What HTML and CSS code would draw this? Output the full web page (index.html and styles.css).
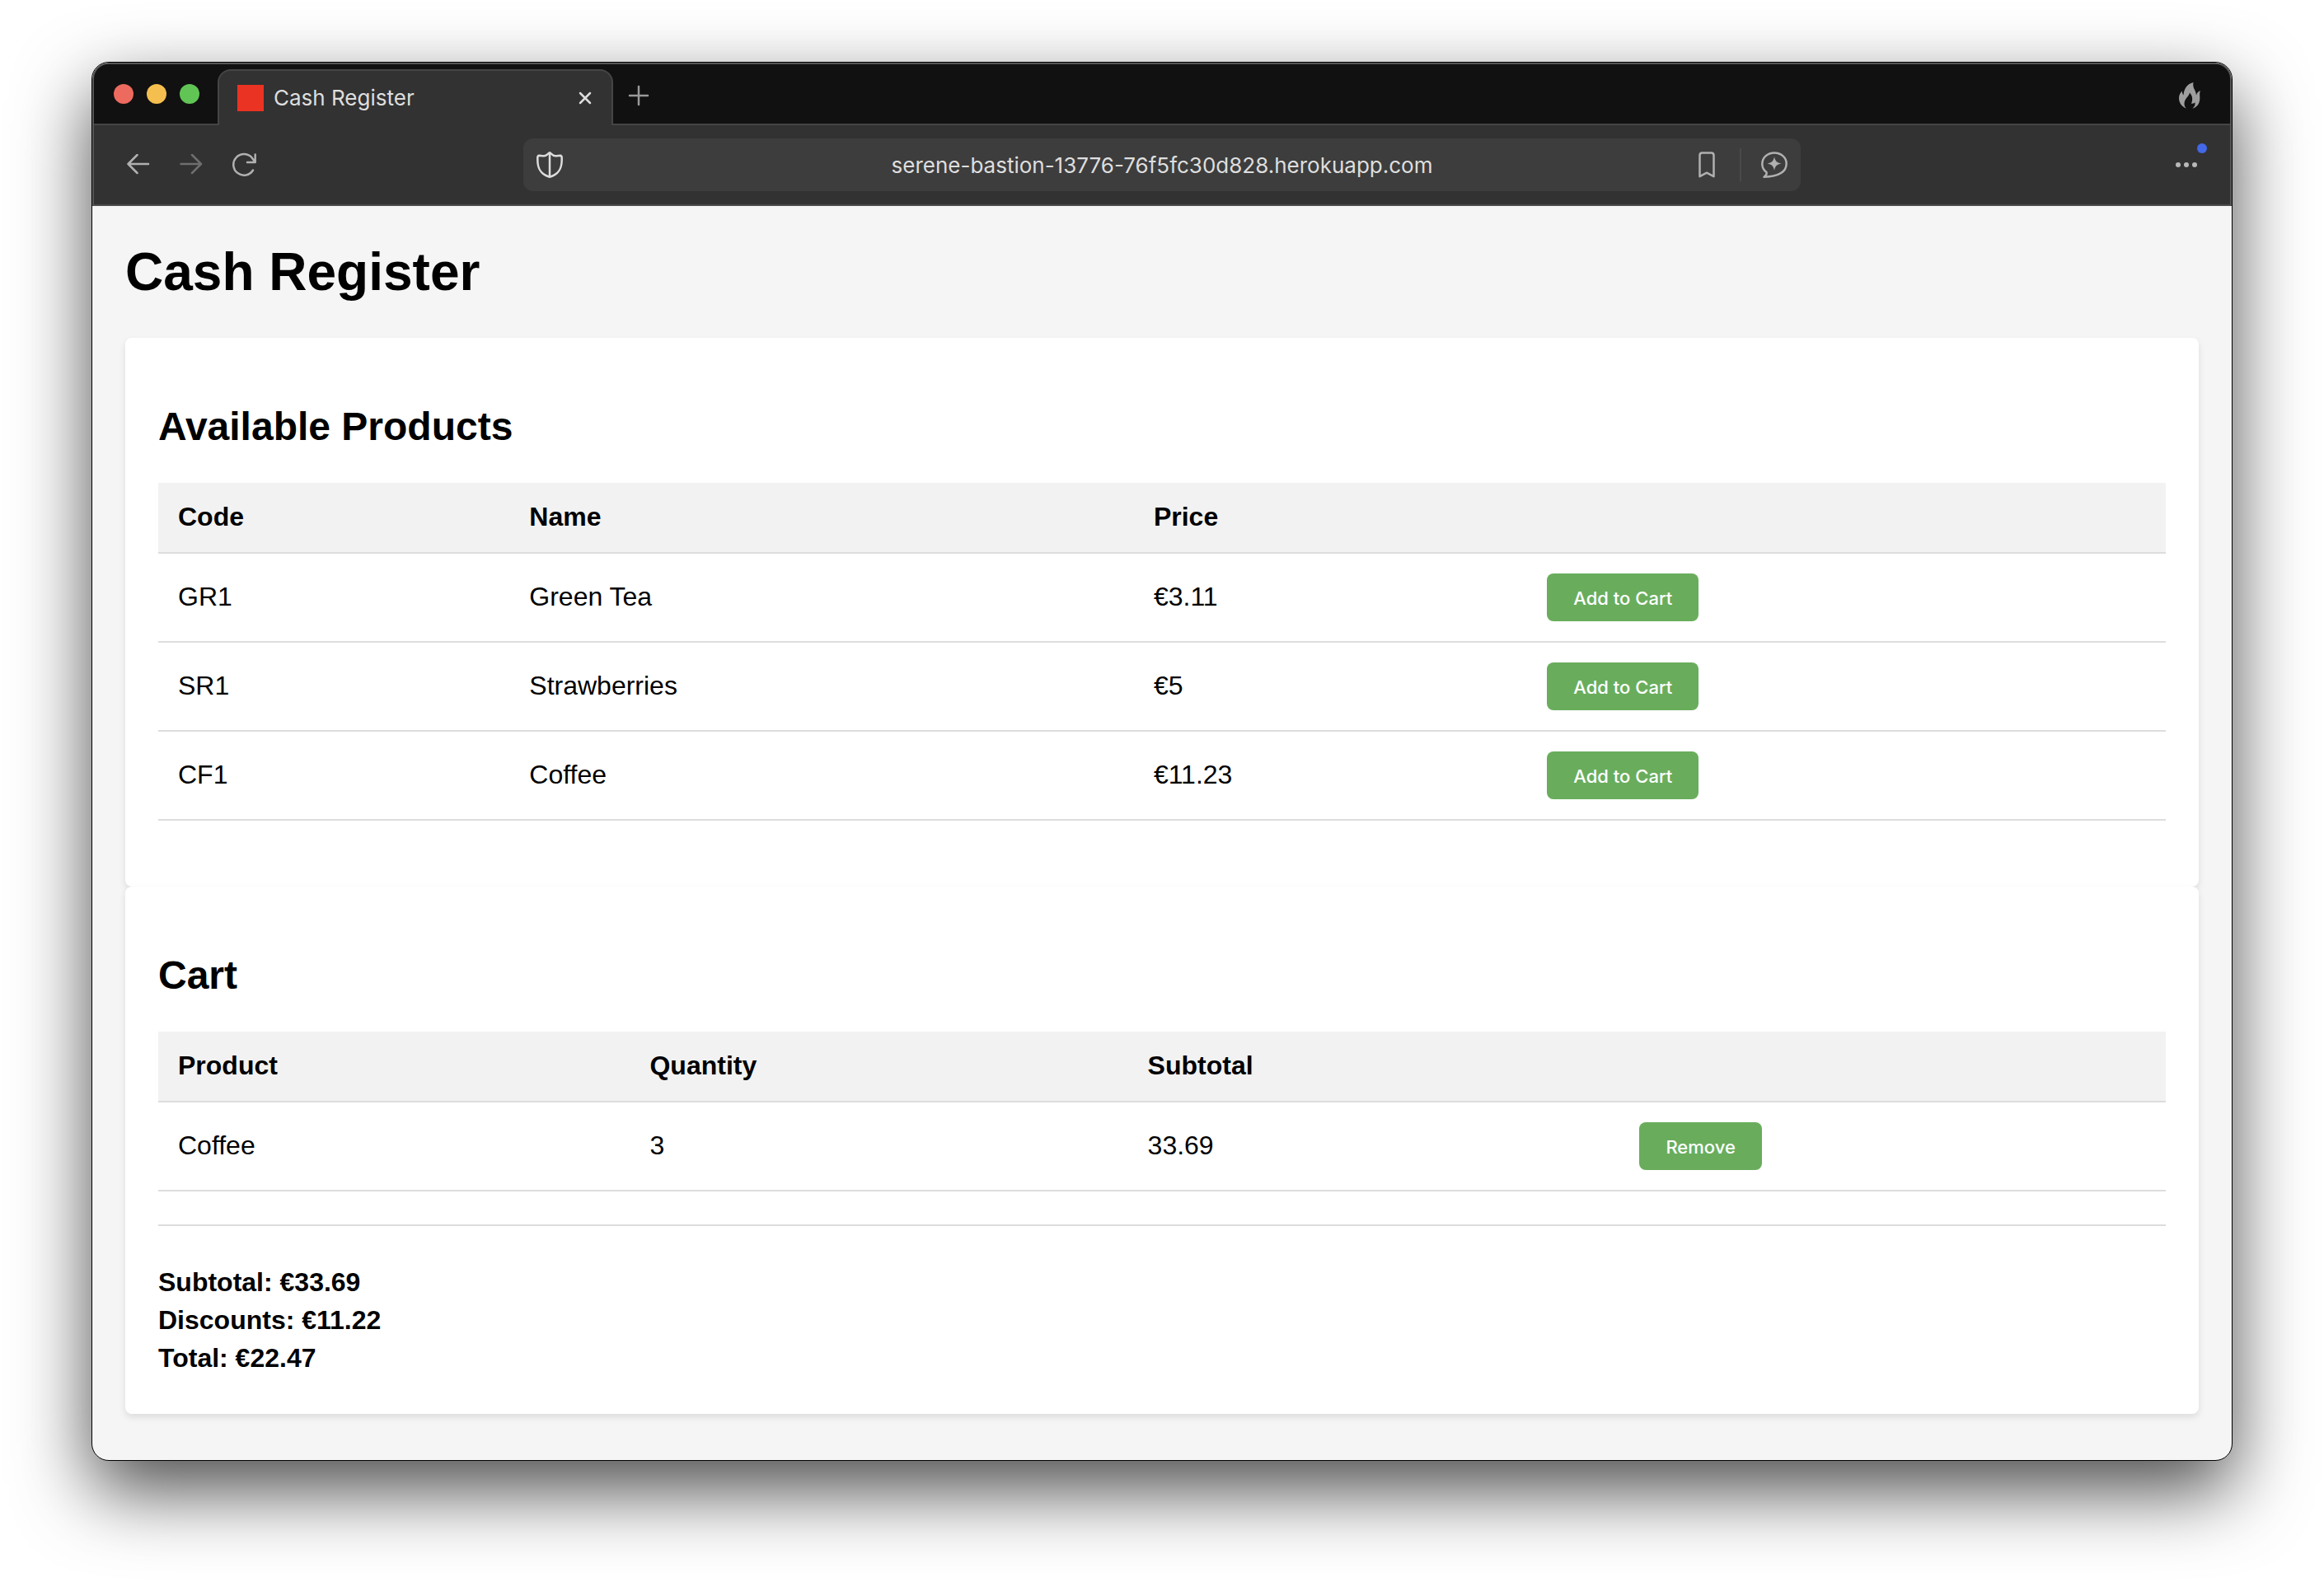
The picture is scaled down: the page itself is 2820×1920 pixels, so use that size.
FILE: index.html
```html
<!DOCTYPE html>
<html lang="en">
<head>
<meta charset="utf-8">
<title>Cash Register</title>
<link rel="stylesheet" href="styles.css">
</head>
<body>
<div class="window">
  <header class="chrome">
    <div class="tabstrip">
      <div class="lights">
        <button class="light light-close" aria-label="Close window"></button>
        <button class="light light-min" aria-label="Minimize window"></button>
        <button class="light light-max" aria-label="Zoom window"></button>
      </div>
      <div class="tab">
        <span class="favicon"></span>
        <span class="tab-title">Cash Register</span>
        <button class="icon-btn" aria-label="Close tab">
          <svg class="icon" width="16" height="16" viewBox="0 0 16 16" stroke="#dcdcdc" stroke-width="2.5"><path d="M2 2l12 12M14 2L2 14"/></svg>
        </button>
      </div>
      <button class="icon-btn new-tab" aria-label="New tab">
        <svg class="icon" width="26" height="26" viewBox="0 0 26 26" stroke="#999" stroke-width="2.5"><path d="M13 2v22M2 13h22"/></svg>
      </button>
      <button class="icon-btn fire" aria-label="Clear data">
        <svg width="26" height="32" viewBox="0 0 26 32"><path fill="#9e9e9e" d="M17.5 0C16.5 4 18 7 19.5 10C20.5 12 20.8 14 21 15.5C21.8 13 23 11 26 10C24.5 13 25.5 16 25.3 20C25 26 22 30 16.5 31.7C19 29 20 27.5 19.5 24C19 25 17.5 26 15 25.7C17 21 16.5 16 13 12.5C12.5 17 6.5 19.5 6.5 26C6.5 28.5 7.5 30.5 9 31.5C3.5 29.5 0 25 0 19C0 15.5 1.5 12.5 3.8 10.5C3.8 12.5 4.3 14 5.5 15.5C6 9 9 2 17.5 0z"/></svg>
      </button>
    </div>
    <div class="toolbar">
      <nav class="nav">
        <button class="icon-btn" aria-label="Back">
          <svg class="icon" width="28" height="26" viewBox="0 0 28 26" stroke="#b0b0b0" stroke-width="2.5"><path d="M12.5 1L1.5 12L12.5 23M1.5 12H26"/></svg>
        </button>
        <button class="icon-btn" aria-label="Forward">
          <svg class="icon" width="28" height="26" viewBox="0 0 28 26" stroke="#6e6e6e" stroke-width="2.5"><path d="M15 1L26 12L15 23M26 12H1.5"/></svg>
        </button>
        <button class="icon-btn" aria-label="Reload">
          <svg class="icon" width="30" height="30" viewBox="0 0 30 30" stroke="#b0b0b0" stroke-width="2.5"><path d="M25 21.5A12.8 12.8 0 1 1 23.5 6.2L27.5 11.5M27.7 2.5V12H18"/></svg>
        </button>
      </nav>
      <div class="address">
        <svg class="icon shield" width="32" height="32" viewBox="0 0 32 32" stroke="#dcdcdc" stroke-width="2.5"><path d="M16 1.3C14.5 1.3 13 5.3 9 5.3C6.5 5.3 5 4.8 3.2 4.8Q1.3 5 1.3 7.5V10C1.3 22 6 28 16 30.7C26 28 30.7 22 30.7 10V7.5Q30.7 5 28.8 4.8C27 4.8 25.5 5.3 23 5.3C19 5.3 17.5 1.3 16 1.3zM16 1.3V30.7"/></svg>
        <input class="url" type="text" aria-label="Address" value="serene-bastion-13776-76f5fc30d828.herokuapp.com" readonly>
        <button class="icon-btn" aria-label="Bookmark">
          <svg class="icon" width="20" height="32" viewBox="0 0 20 32" stroke="#b0b0b0" stroke-width="2.5"><path d="M4.5 1.5H15.5Q18.5 1.5 18.5 4.5V30.2L10 25.7L1.5 30.2V4.5Q1.5 1.5 4.5 1.5z"/></svg>
        </button>
        <span class="divider"></span>
        <button class="icon-btn" aria-label="Chat">
          <svg class="icon" width="32" height="32" viewBox="0 0 32 32" stroke="#b0b0b0" stroke-width="2.5"><path d="M6.5 25C3 22.5 1.3 19 1.3 15C1.3 7.5 7.5 1.5 16 1.5C24.5 1.5 30.7 7.5 30.7 14.5C30.7 24.5 22 30 3.5 30.7C7 28.5 7 27 6.5 25z"/><path fill="#b0b0b0" stroke="none" d="M16 6C17 11.500 19 13.500 24.5 14.5C19 15.5 17 17.500 16 23C15 17.500 13 15.5 7.5 14.5C13 13.500 15 11.500 16 6z"/></svg>
        </button>
      </div>
      <button class="icon-btn menu" aria-label="Menu">
        <svg width="26" height="6" viewBox="0 0 26 6" fill="#b8b8b8"><circle cx="3" cy="3" r="3"/><circle cx="13" cy="3" r="3"/><circle cx="23" cy="3" r="3"/></svg>
        <span class="badge"></span>
      </button>
    </div>
  </header>

  <main class="page">
    <h1>Cash Register</h1>

    <section class="card">
      <h2>Available Products</h2>
      <table class="products">
        <thead>
          <tr><th class="col-code">Code</th><th class="col-name">Name</th><th class="col-price">Price</th><th></th></tr>
        </thead>
        <tbody>
          <tr><td>GR1</td><td>Green Tea</td><td>€3.11</td><td><button class="btn">Add to Cart</button></td></tr>
          <tr><td>SR1</td><td>Strawberries</td><td>€5</td><td><button class="btn">Add to Cart</button></td></tr>
          <tr><td>CF1</td><td>Coffee</td><td>€11.23</td><td><button class="btn">Add to Cart</button></td></tr>
        </tbody>
      </table>
    </section>

    <section class="card">
      <h2>Cart</h2>
      <table class="cart">
        <thead>
          <tr><th class="col-product">Product</th><th class="col-quantity">Quantity</th><th class="col-subtotal">Subtotal</th><th></th></tr>
        </thead>
        <tbody>
          <tr><td>Coffee</td><td>3</td><td>33.69</td><td><button class="btn">Remove</button></td></tr>
        </tbody>
      </table>
      <div class="totals">
        <p>Subtotal: €33.69</p>
        <p>Discounts: €11.22</p>
        <p>Total: €22.47</p>
      </div>
    </section>
  </main>
</div>
</body>
</html>
```

FILE: styles.css
```css
* {
  box-sizing: border-box;
}

body {
  margin: 0;
  min-height: 100vh;
  padding: 75px 111px 147px;
  display: flex;
  flex-direction: column;
  background: #fff;
  color: #000;
  font-family: "Liberation Sans", Arial, sans-serif;
  font-size: 32px;
  line-height: 36px;
}

.window {
  flex: 1;
  display: flex;
  flex-direction: column;
  border: 1px solid #000;
  border-radius: 21px;
  background: #f5f5f5;
  box-shadow: 0 36px 90px rgba(0, 0, 0, 0.7);
}

/* Browser chrome */

.chrome {
  border: 2px solid #565656;
  border-bottom-color: #4a4a4a;
  border-radius: 20px 20px 0 0;
  background: #323232;
  font-family: Inter, sans-serif;
  font-size: 26px;
  line-height: 32px;
  color: #dedede;
  overflow: hidden;
}

.tabstrip {
  display: flex;
  align-items: stretch;
  height: 74px;
  padding: 2px 36px 0 24px;
  background: #111;
  box-shadow: inset 0 -2px #454545;
}

.icon-btn {
  display: flex;
  align-items: center;
  justify-content: center;
  padding: 0;
  border: 0;
  background: none;
}

.icon {
  fill: none;
  stroke-linecap: round;
  stroke-linejoin: round;
}

.lights {
  display: flex;
  gap: 16px;
  padding-top: 22px;
  width: 126px;
}

.light {
  width: 24px;
  height: 24px;
  padding: 0;
  border: 0;
  border-radius: 50%;
}

.light-close { background: #ed6a5f; }
.light-min { background: #f5bf4f; }
.light-max { background: #61c555; }

.tab {
  display: flex;
  align-items: center;
  gap: 12px;
  width: 480px;
  margin-top: 4px;
  padding: 0 24px 0 22px;
  border: 2px solid #454545;
  border-bottom: 0;
  border-radius: 16px 16px 0 0;
  background: #323232;
}

.favicon {
  width: 32px;
  height: 32px;
  background: #eb3323;
}

.tab-title {
  flex: 1;
}

.new-tab {
  margin-left: 18px;
}

.fire {
  margin-left: auto;
}

.toolbar {
  display: flex;
  align-items: center;
  justify-content: space-between;
  height: 96px;
  padding: 0 40px;
}

.nav {
  display: flex;
  gap: 36px;
  width: 156px;
}

.address {
  display: flex;
  align-items: center;
  width: 61.7%;
  height: 64px;
  padding: 0 16px;
  border-radius: 12px;
  background: #3d3d3d;
}

.shield {
  margin-right: 76px;
}

.url {
  flex: 1;
  min-width: 0;
  border: 0;
  padding: 2px 0 0;
  background: none;
  color: inherit;
  font: inherit;
  text-align: center;
}

.divider {
  width: 2px;
  height: 40px;
  margin: 0 24px 0 30px;
  background: #4a4a4a;
}

.menu {
  position: relative;
  width: 156px;
  height: 44px;
  justify-content: flex-end;
}

.badge {
  position: absolute;
  top: -4px;
  right: -12px;
  width: 12px;
  height: 12px;
  border-radius: 50%;
  background: #4368e8;
}

/* Page */

.page {
  flex: 1;
  padding: 40px;
}

h1 {
  margin: 0 0 40px;
  font-size: 64px;
  line-height: 80px;
}

h2 {
  margin: 40px 0;
  font-size: 48px;
  line-height: 56px;
}

.card {
  display: flow-root;
  padding: 40px;
  border-radius: 8px;
  background: #fff;
  box-shadow: 0 4px 8px rgba(0, 0, 0, 0.1);
}

table {
  width: 100%;
  margin-bottom: 40px;
  border-collapse: separate;
  border-spacing: 0;
  table-layout: fixed;
}

th,
td {
  padding: 23px 24px 25px;
  border-bottom: 2px solid #ddd;
  text-align: left;
  vertical-align: middle;
}

th {
  background: #f2f2f2;
}

.col-code { width: 17.5%; }
.col-name { width: 31.1%; }
.col-price { width: 19.6%; }
.col-product { width: 23.5%; }
.col-quantity { width: 24.8%; }
.col-subtotal { width: 24.5%; }

td:last-child {
  padding: 24px;
}

.btn {
  display: block;
  padding: 17px 32px 15px;
  border: 0;
  border-radius: 8px;
  background: #69ad5c;
  color: #fff;
  font-family: Inter, sans-serif;
  font-size: 22px;
  font-weight: 500;
  line-height: 26px;
}

.totals {
  border-top: 2px solid #ddd;
  padding-top: 40px;
  font-weight: bold;
}

.totals p {
  margin: 10px 0;
}
```
